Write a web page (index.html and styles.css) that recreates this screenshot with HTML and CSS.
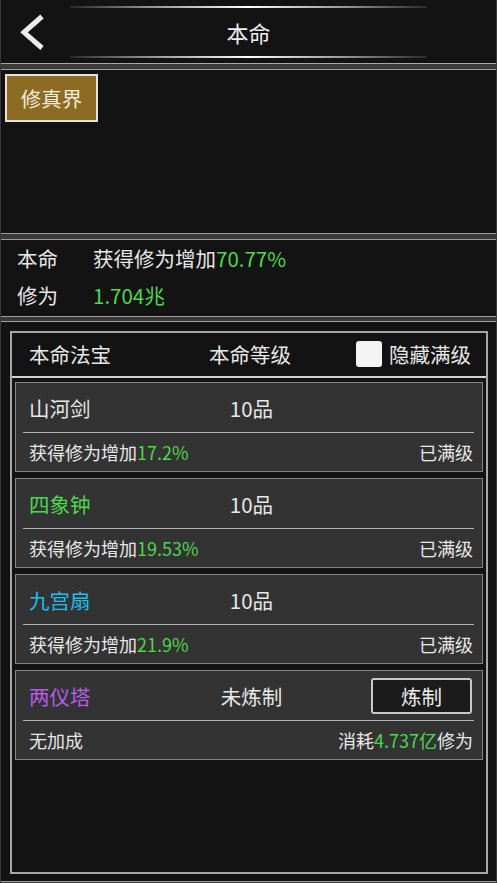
FILE: index.html
```html
<!DOCTYPE html>
<html lang="zh-CN">
<head>
<meta charset="utf-8">
<title>本命</title>
<link rel="stylesheet" href="styles.css">
</head>
<body>
<div class="app">
  <header class="topbar">
    <div class="back">
      <svg width="70" height="63" viewBox="0 0 70 63"><path d="M42 16.5 L24 32.3 L42 48" fill="none" stroke="#ececec" stroke-width="5"/></svg>
    </div>
    <div class="title-col">
      <div class="deco"></div>
      <div class="title">本命</div>
      <div class="deco"></div>
    </div>
    <div></div>
  </header>

  <section class="panel realm">
    <button class="realm-btn">修真界</button>
  </section>

  <section class="panel stats">
    <div class="stat-row"><span class="stat-label">本命</span><span>获得修为增加<span class="green">70.77%</span></span></div>
    <div class="stat-row"><span class="stat-label">修为</span><span class="green">1.704兆</span></div>
  </section>

  <section class="panel list-panel">
    <div class="inner">
      <div class="thead">
        <span class="th-left">本命法宝</span>
        <span class="th-mid">本命等级</span>
        <span class="th-right"><span class="check"></span>隐藏满级</span>
      </div>
      <div class="cards">
        <div class="card">
          <div class="card-top"><span class="name">山河剑</span><span class="level">10品</span><span></span></div>
          <div class="divider"></div>
          <div class="card-bot"><span>获得修为增加<span class="green">17.2%</span></span><span>已满级</span></div>
        </div>
        <div class="card">
          <div class="card-top"><span class="name green">四象钟</span><span class="level">10品</span><span></span></div>
          <div class="divider"></div>
          <div class="card-bot"><span>获得修为增加<span class="green">19.53%</span></span><span>已满级</span></div>
        </div>
        <div class="card">
          <div class="card-top"><span class="name cyan">九宫扇</span><span class="level">10品</span><span></span></div>
          <div class="divider"></div>
          <div class="card-bot"><span>获得修为增加<span class="green">21.9%</span></span><span>已满级</span></div>
        </div>
        <div class="card">
          <div class="card-top"><span class="name purple">两仪塔</span><span class="level">未炼制</span><span class="btn-wrap"><button class="refine">炼制</button></span></div>
          <div class="divider"></div>
          <div class="card-bot"><span>无加成</span><span>消耗<span class="green">4.737亿</span>修为</span></div>
        </div>
      </div>
    </div>
  </section>
</div>
</body>
</html>
```

FILE: styles.css
```css
html, body {
  margin: 0;
  padding: 0;
}
body {
  width: 497px;
  height: 883px;
  overflow: hidden;
  background: #3a3a3a;
  font-family: "Noto Sans CJK SC", "Noto Sans", sans-serif;
  color: #e8e8e8;
}
.app {
  display: flex;
  flex-direction: column;
  height: 883px;
  padding: 0 1px 1px;
  box-sizing: border-box;
}
.topbar {
  height: 64px;
  box-sizing: border-box;
  background: #131313;
  border-bottom: 1px solid #a8a8a8;
  display: grid;
  grid-template-columns: 69px 1fr 69px;
}
.back {
  display: flex;
  align-items: flex-start;
}
.back svg {
  display: block;
  margin-left: -1px;
}
.title-col {
  display: flex;
  flex-direction: column;
  padding-top: 6px;
}
.deco {
  height: 2px;
  background: linear-gradient(to right, #2a2a2a, #8a8a8a 20%, #ffffff 50%, #8a8a8a 80%, #2a2a2a);
}
.title {
  height: 48px;
  display: flex;
  align-items: center;
  justify-content: center;
  font-size: 22px;
  color: #f0f0f0;
}
.panel {
  background: #131313;
  border-top: 1px solid #9c9c9c;
  border-bottom: 1px solid #9c9c9c;
  box-sizing: border-box;
}
.realm {
  margin-top: 5px;
  height: 165px;
  padding: 4px 4px;
}
.realm-btn {
  width: 93px;
  height: 48px;
  box-sizing: border-box;
  background: #8d6b22;
  border: 2px solid #e2e2e2;
  color: #f2ecdc;
  font-family: "Noto Sans CJK SC", "Noto Sans", sans-serif;
  font-size: 20.5px;
  padding: 0;
  display: block;
}
.stats {
  margin-top: 5px;
  height: 78px;
  padding: 0 0 0 16px;
  font-size: 20.5px;
}
.stat-row {
  height: 37px;
  display: flex;
  align-items: center;
}
.stat-row:first-child {
  height: 36px;
}
.stat-label {
  width: 76px;
}
.green {
  color: #4bd84b;
}
.cyan {
  color: #1fbdf0;
}
.purple {
  color: #b85ce8;
}
.list-panel {
  margin-top: 4px;
  flex: 1;
  padding: 9px 8px 7px 9px;
  display: flex;
}
.inner {
  flex: 1;
  border: 2px solid #a6a6a6;
  display: flex;
  flex-direction: column;
}
.thead {
  height: 45px;
  box-sizing: border-box;
  border-bottom: 2px solid #d2d2d2;
  display: grid;
  grid-template-columns: 1fr auto 1fr;
  align-items: center;
  font-size: 20.5px;
  padding: 0 15px 1px 17px;
}
.th-right {
  justify-self: end;
  display: flex;
  align-items: center;
}
.check {
  width: 26px;
  height: 26px;
  background: #f4f4f4;
  border-radius: 3px;
  margin-right: 7px;
}
.cards {
  display: flex;
  flex-direction: column;
  gap: 6px;
  padding: 4px 3px 0;
}
.card {
  height: 90px;
  box-sizing: border-box;
  background: #333333;
  border: 1px solid #858585;
  display: flex;
  flex-direction: column;
}
.card-top {
  height: 49px;
  display: grid;
  grid-template-columns: 1fr auto 1fr;
  align-items: center;
  padding: 0 8px 0 13px;
  font-size: 20.5px;
}
.btn-wrap {
  justify-self: end;
  display: flex;
}
.refine {
  width: 101px;
  height: 36px;
  box-sizing: border-box;
  margin-right: 2px;
  background: #1b1b1b;
  border: 2px solid #c8c8c8;
  border-radius: 3px;
  color: #ececec;
  font-family: "Noto Sans CJK SC", "Noto Sans", sans-serif;
  font-size: 20.5px;
  padding: 0;
}
.divider {
  height: 1px;
  margin: 0 8px 0 7px;
  background: #b4b4b4;
}
.card-bot {
  flex: 1;
  display: flex;
  align-items: center;
  justify-content: space-between;
  padding: 0 9px 0 13px;
  font-size: 18px;
}
```
